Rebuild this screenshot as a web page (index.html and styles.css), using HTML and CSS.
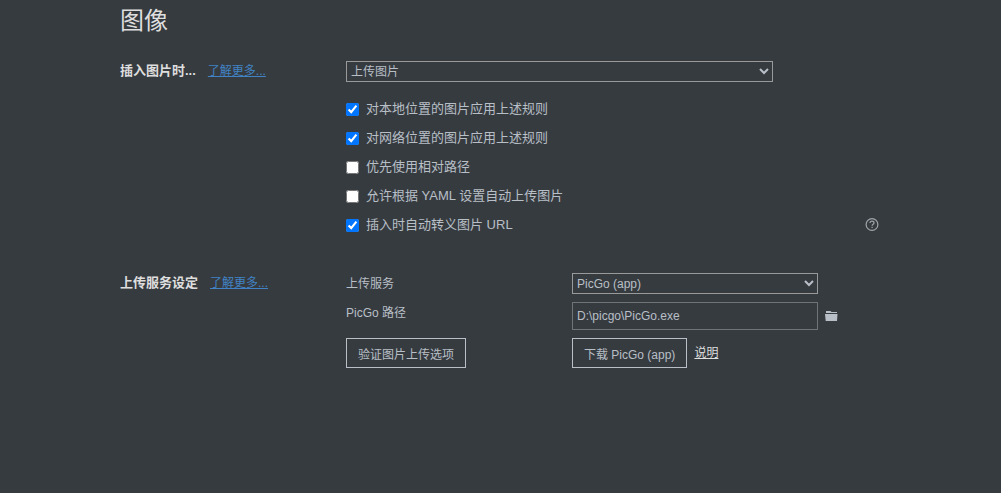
FILE: index.html
```html
<!DOCTYPE html>
<html lang="zh-CN">
<head>
    <meta charset="UTF-8">
    <meta name="viewport" content="width=device-width, initial-scale=1.0">
    <title>图像</title>
    <link rel="stylesheet" href="styles.css">
</head>
<body>

    <main class="panel">
        <h1>图像</h1>

        <section class="section">
            <div class="section-head">
                <label class="section-title" for="insert_action">插入图片时...</label>
                <a class="more" href="#">了解更多...</a>
            </div>
            <div class="section-body">
                <select id="insert_action" class="insert-action">
                    <option>上传图片</option>
                </select>

                <div class="options">
                    <label class="option"><input type="checkbox" checked>对本地位置的图片应用上述规则</label>
                    <label class="option"><input type="checkbox" checked>对网络位置的图片应用上述规则</label>
                    <label class="option"><input type="checkbox">优先使用相对路径</label>
                    <label class="option"><input type="checkbox">允许根据 YAML 设置自动上传图片</label>
                    <div class="option-row">
                        <label class="option"><input type="checkbox" checked>插入时自动转义图片 URL</label>
                        <svg class="help" viewBox="0 0 14 14" aria-hidden="true">
                            <circle cx="7" cy="6.5" r="5.9"/>
                            <path d="M5 5.1C5 3.8 5.8 3.2 7 3.2s2 .7 2 1.7c0 1.4-1.9 1.4-1.9 2.9M7.1 8.8v1.3"/>
                        </svg>
                    </div>
                </div>
            </div>
        </section>

        <section class="section">
            <div class="section-head">
                <h2 class="section-title">上传服务设定</h2>
                <a class="more" href="#">了解更多...</a>
            </div>
            <div class="section-body uploader">
                <label for="service">上传服务</label>
                <select id="service">
                    <option>PicGo (app)</option>
                </select>

                <label for="picgo_path">PicGo 路径</label>
                <div class="field">
                    <input type="text" id="picgo_path" value="D:\picgo\PicGo.exe">
                    <svg class="folder" viewBox="0 0 14 12" aria-hidden="true">
                        <path d="M1 3V1h4.5l1 1H12v1zM0 4h12.5l-.5 7H.7z"/>
                    </svg>
                </div>

                <div class="field">
                    <button type="button">验证图片上传选项</button>
                </div>
                <div class="field">
                    <button type="button">下载 PicGo (app)</button>
                    <a class="docs" href="#">说明</a>
                </div>
            </div>
        </section>
    </main>

</body>
</html>
```

FILE: styles.css
```css
* {
    box-sizing: border-box;
}
body {
    margin: 0;
    background-color: #363b40;
    color: #b8bfc6;
    font-family: "Liberation Sans", "Noto Sans CJK SC", sans-serif;
    font-size: 13px;
    line-height: 20px;
}
.panel {
    padding: 5px 120px;
}
h1 {
    margin: 0 0 24px;
    color: #dedede;
    font-size: 24px;
    font-weight: normal;
    line-height: 32px;
}
.section {
    display: grid;
    grid-template-columns: 226px 1fr;
    margin-bottom: 38px;
}
.section-head {
    display: flex;
    align-items: baseline;
    align-self: start;
    gap: 12px;
}
.section-title {
    margin: 0;
    color: #dedede;
    font-size: 13px;
    font-weight: bold;
}
.more {
    color: #4183c4;
    font-size: 12px;
}
select,
input[type="text"],
button {
    border: 1px solid #999;
    border-radius: 0;
    background-color: transparent;
    color: #b8bfc6;
    font-family: inherit;
    font-size: 12px;
}
select {
    width: 246px;
    height: 21px;
    padding: 0;
}
.insert-action {
    display: block;
    width: 427px;
}
option {
    background-color: #363b40;
}
.options {
    display: flex;
    flex-direction: column;
    gap: 9px;
    margin-top: 17px;
}
.option-row {
    display: flex;
    align-items: center;
    justify-content: space-between;
}
.option {
    display: flex;
    align-items: center;
    gap: 7px;
}
.option input {
    width: 13px;
    height: 13px;
    margin: 0;
    accent-color: #0075ff;
}
.help {
    width: 14px;
    height: 14px;
    margin-right: 2px;
    fill: none;
    stroke: #a0a5aa;
    stroke-width: 1.2;
}
.uploader {
    display: grid;
    grid-template-columns: 226px 1fr;
    row-gap: 8px;
    font-size: 12px;
}
.uploader label {
    padding-top: 1px;
}
.field {
    display: flex;
    align-items: center;
    gap: 7px;
}
input[type="text"] {
    width: 246px;
    height: 28px;
    padding: 0 4px;
    border-color: #707478;
}
.folder {
    width: 14px;
    height: 12px;
    fill: #b8bfc6;
}
button {
    height: 30px;
    padding: 0 11px;
    border-color: #b8bfc6;
}
.docs {
    color: #dedede;
}
```
